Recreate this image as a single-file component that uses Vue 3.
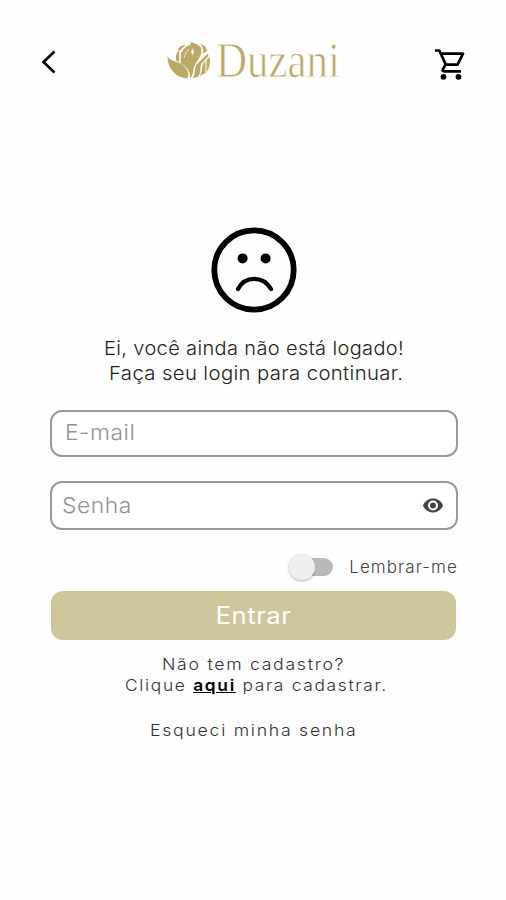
<script setup>
import { ref } from 'vue'

const email = ref('')
const password = ref('')
const visible = ref(false)
const remember = ref(false)
</script>

<template>
  <main class="screen">
    <header class="topbar">
      <button class="icon-button back" type="button" aria-label="Voltar">
        <svg width="18" height="26" viewBox="0 0 18 26" fill="none" stroke="#000" stroke-width="2.7">
          <path d="M14.500 2.500 3.500 13 14.500 23.500" />
        </svg>
      </button>
      <svg class="logo" width="190" height="66" viewBox="0 -10 190 66">
        <g fill="#bba968">
          <path d="M0.500 18.500C4 24.500 15 23 19.500 31C21 34 22.500 36 20.500 40.500C9 39.500 0.500 31 0.500 18.500Z" />
          <path d="M9.500 23C8.500 20 9 17 10 14.500L12.500 12L12 24Z" />
          <path d="M10.500 12.500C12 9 15 6.500 18.500 7L13.500 12Z" />
          <path d="M13.500 25.500L14 15C16 11 19 8 23 7L24.500 4L30.500 6.500L34 9.500L34.500 15C33 20 29 24 27 29C26 33 26 38 23 40.500C24 34 20 28.500 13.500 25.500Z" />
          <path d="M33 5.500L38.500 8.500L40 13L36 15.500C36.500 11.500 35.500 8 33 5.500Z" />
          <path d="M25.500 40C29 36 27 31 29.500 26.500L41 15.500L41.500 18L34 26C33 31 34 36 30.500 39Z" />
          <path d="M32.500 38C36 33 34 29 36.500 25L38.500 23L38.500 35Z" />
          <path d="M39.500 34V22L42.500 19C43.500 24 42.500 31 39.500 34Z" />
        </g>
        <path d="M24 14 25.500 10.500 27.300 14 25.500 17Z" fill="#fefefe" />
        <path d="M17 20Q18 14 22 11" fill="none" stroke="#fefefe" stroke-width="0.7" />
        <text x="49" y="38.500" textLength="124" lengthAdjust="spacingAndGlyphs">Duzani</text>
      </svg>
      <button class="icon-button cart" type="button" aria-label="Carrinho">
        <svg width="36" height="36" viewBox="0 0 36 36" fill="none" stroke="#000" stroke-width="2.7">
          <path d="M2 3.500H6.300L12.800 17.600H24.500L30 6.700H8" stroke-linejoin="round" />
          <path d="M12.800 17.200 9.900 22.200Q9.100 24.300 11.200 24.300H28" />
          <circle cx="10.500" cy="29.800" r="2.900" fill="#000" stroke="none" />
          <circle cx="25.500" cy="29.800" r="2.900" fill="#000" stroke="none" />
        </svg>
      </button>
    </header>

    <svg class="face" width="88" height="88" viewBox="0 0 88 88" fill="none" stroke="#000">
      <circle cx="44" cy="44" r="39.7" stroke-width="5.8" />
      <path d="M28 63C35 49.500 53 49.500 61 63" stroke-width="4.2" stroke-linecap="round" />
      <circle cx="32.6" cy="32.4" r="5" fill="#000" stroke="none" />
      <circle cx="55.6" cy="32.4" r="5" fill="#000" stroke="none" />
    </svg>

    <div class="message">
      <span class="m1">Ei, você ainda não está logado!</span>
      <span class="m2">Faça seu login para continuar.</span>
    </div>

    <form class="form" @submit.prevent>
      <label class="field email">
        <input v-model="email" type="text" placeholder="E-mail" />
      </label>
      <label class="field password">
        <input v-model="password" :type="visible ? 'text' : 'password'" placeholder="Senha" />
        <svg class="eye" width="20" height="15" viewBox="0 0 20 15" @click="visible = !visible">
          <path d="M0 7.500C3.500-1.800 16.500-1.800 20 7.500C16.500 16.800 3.500 16.800 0 7.500Z" fill="#444" />
          <circle cx="10" cy="7.500" r="4" fill="#444" stroke="#fff" stroke-width="2" />
        </svg>
      </label>
      <div class="remember">
        <button class="switch" :class="{ on: remember }" type="button" aria-label="Lembrar-me" @click="remember = !remember">
          <span class="thumb"></span>
        </button>
        <span class="remember-label">Lembrar-me</span>
      </div>
      <button class="submit" type="submit"><span>Entrar</span></button>
    </form>

    <footer class="links">
      <span class="l1">Não tem cadastro?</span>
      <span class="l2">Clique <a>aqui</a> para cadastrar.</span>
      <span class="l3">Esqueci minha senha</span>
    </footer>
  </main>
</template>

<style>
body {
  background: #fefefe;
}
</style>

<style scoped>
.screen {
  box-sizing: border-box;
  width: 506px;
  height: 900px;
  overflow: hidden;
  background: #fefefe;
  font-family: Inter, "Open Sans", sans-serif;
  font-weight: 300;
  display: flex;
  flex-direction: column;
}
button {
  border: 0;
  padding: 0;
  background: none;
  font: inherit;
}
svg {
  display: block;
  flex: none;
}
.topbar {
  box-sizing: border-box;
  display: flex;
  align-items: flex-start;
  height: 188px;
  padding: 28px 34px 0 40px;
}
.back {
  margin-top: 21px;
}
.logo {
  margin-left: 109px;
  overflow: visible;
}
.logo text {
  font-family: "Liberation Serif", serif;
  font-size: 50px;
  font-weight: 400;
  fill: #bba968;
  stroke: #fefefe;
  stroke-width: 0.8px;
}
.cart {
  margin: 19px 0 0 76px;
}
.face {
  margin-left: 209.5px;
  margin-top: 37.5px;
}
.message {
  display: flex;
  flex-direction: column;
  align-items: flex-start;
  margin: 23.5px 0 0 104px;
  font-size: 19px;
  line-height: 24.5px;
  color: #222;
  white-space: nowrap;
  letter-spacing: 0.35px;
}
.m1,
.m2,
.l1,
.l2,
.l3 {
  transform-origin: left;
  transform: scaleX(1.052);
}
.m2 {
  margin-left: 5px;
  transform: scaleX(1.069);
}
.form {
  margin: 24px 48px 0 49.5px;
  display: flex;
  flex-direction: column;
}
.field {
  box-sizing: border-box;
  display: flex;
  align-items: center;
  border: 2px solid #999;
  border-radius: 12px;
  background: #fff;
}
.email {
  height: 47px;
  padding: 0 14px 3px 13px;
}
.password {
  height: 49px;
  margin-top: 24px;
  padding: 0 13px 2px 10.5px;
}
input {
  flex: 1;
  min-width: 0;
  height: 36px;
  padding: 0;
  border: 0;
  outline: 0;
  background: none;
  font: 300 22px Inter, sans-serif;
  letter-spacing: 0.5px;
  transform: scaleX(1.04);
  transform-origin: left;
}
.password input {
  margin-right: 14px;
}
input::placeholder {
  color: #929292;
  opacity: 1;
}
.eye {
  margin-top: 2px;
}
.remember {
  display: flex;
  align-items: center;
  justify-content: flex-end;
  height: 61px;
  padding-top: 13px;
  box-sizing: border-box;
}
.switch {
  width: 44px;
  height: 26px;
  display: flex;
  align-items: center;
  background: linear-gradient(#b9b9b9, #b9b9b9) 14px 4px / 16px 18px no-repeat;
  border-radius: 13px;
}
.switch::after {
  content: "";
  width: 18px;
  height: 18px;
  background: #b9b9b9;
  border-radius: 0 9px 9px 0;
}
.thumb {
  width: 26px;
  height: 26px;
  border-radius: 50%;
  background: #eee;
  box-shadow: 0 1px 3px rgba(0, 0, 0, 0.3);
}
.remember-label {
  margin-left: 16px;
  font-size: 17px;
  color: #444;
  letter-spacing: 1.1px;
  white-space: nowrap;
}
.submit {
  height: 49px;
  margin: 0 2px 0 1.5px;
  border-radius: 12px;
  background: #cfc59b;
  color: #fff;
  font-size: 24px;
  font-weight: 400;
  letter-spacing: 0.5px;
}
.submit span {
  display: inline-block;
  transform: scaleX(1.07);
}
.links {
  display: flex;
  flex-direction: column;
  align-items: flex-start;
  margin-top: 13.5px;
  font-size: 16.5px;
  line-height: 21px;
  color: #333;
  white-space: nowrap;
  letter-spacing: 1.6px;
}
.l1 {
  margin-left: 162px;
  transform: scaleX(1.07);
}
.l2 {
  margin-left: 125px;
}
.l2 a {
  font-weight: 600;
  color: #000;
  text-decoration: underline;
  text-decoration-thickness: 1px;
}
.l3 {
  margin-top: 24px;
  margin-left: 150px;
  transform: scaleX(1.072);
}
</style>
